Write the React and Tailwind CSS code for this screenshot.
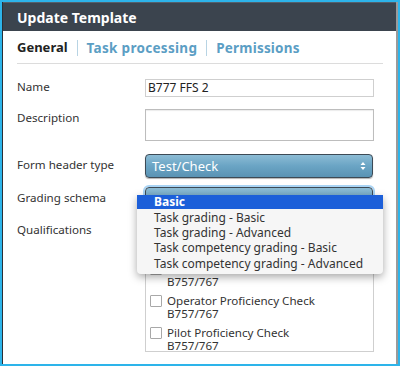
import React from "react";

const font = { fontFamily: '"Noto Sans", "DejaVu Sans", sans-serif' };

function Check({ title, sub }) {
  return (
    <div className="flex items-start gap-[5px] h-[32px]">
      <div className="mt-[1px] w-[12px] h-[12px] border border-[#a8a8a8] bg-white rounded-[1px] shrink-0" />
      <div className="text-[11.6px] leading-[13px] text-[#333]">
        <div>{title}</div>
        <div>{sub}</div>
      </div>
    </div>
  );
}

export default function App() {
  return (
    <div className="w-[400px] h-[366px] bg-[#2db4ea] p-[2px]" style={font}>
      <div className="relative w-full h-full bg-white border-l border-[#2a2f36] border-r-2 border-r-[#9a9a9a] overflow-hidden">
        <div className="h-[29px] bg-[#3b444e] border-t border-[#55606b] flex items-center pl-[14px] text-white font-bold text-[14px]">
          Update Template
        </div>
        <div className="px-[14px]">
          <div className="flex items-center h-[31px] mt-[2px] border-b border-[#dcdcdc] text-[13px] font-bold w-[366px]">
            <span className="text-[#222]">General</span>
            <span className="mx-[9px] w-px h-[16px] bg-[#b8d4e4]" />
            <span className="text-[#5b9ec4] text-[13.5px] tracking-[0.3px]">Task processing</span>
            <span className="mx-[9px] w-px h-[16px] bg-[#b8d4e4]" />
            <span className="text-[#5b9ec4] text-[13.5px] tracking-[0.2px]">Permissions</span>
          </div>

          <div className="grid grid-cols-[128px_229px] items-start text-[11.6px] leading-[14px] text-[#333] mt-[15px]">
            <div className="pt-[1px]">Name</div>
            <div className="h-[18px] border border-[#cfcfcf] flex items-center pl-[2px] text-[12px] text-[#222]">B777 FFS 2</div>

            <div className="mt-[12px] pt-[2px]">Description</div>
            <div className="mt-[12px] h-[32px] border border-[#bdbdbd] shadow-[inset_0_1px_1px_rgba(0,0,0,0.08)]" />

            <div className="mt-[13px] pt-[4px]">Form header type</div>
            <div className="mt-[13px] h-[24px] w-[228px] rounded-[4px] border border-[#3d4a55] bg-gradient-to-b from-[#8cbcd5] via-[#6aa4c4] to-[#5a93b4] flex items-center justify-between px-[6px] text-white text-[13px] shadow-[0_1px_1px_rgba(0,0,0,0.3)]">
              <span>Test/Check</span>
              <svg width="6" height="10" viewBox="0 0 6 10"><path d="M3 1 L5.5 4 H0.5 Z M3 9 L5.5 6 H0.5 Z" fill="white" /></svg>
            </div>

            <div className="mt-[9px] pt-[4px]">Grading schema</div>
            <div className="mt-[9px] h-[24px] w-[228px] rounded-[4px] border border-[#3d4a55] bg-gradient-to-b from-[#8cbcd5] to-[#5a93b4] ring-2 ring-[#a9d4f5]" />

            <div className="mt-[12px]">Qualifications</div>
            <div className="mt-[12px] h-[129px] border border-[#cfcfcf] overflow-hidden pl-[4px] pt-[6px]">
              <Check title="Instrument Proficiency Check" sub="B757/767" />
              <Check title="Line Check" sub="B757/767" />
              <Check title="Operator Proficiency Check" sub="B757/767" />
              <Check title="Pilot Proficiency Check" sub="B757/767" />
            </div>
          </div>
        </div>

        <div className="absolute left-[134px] top-[193px] w-[246px] bg-[#f6f6f6] rounded-b-[4px] shadow-[0_3px_8px_rgba(0,0,0,0.35)] text-[12px] leading-[15.2px] text-[#333] pb-[3px]">
          <div className="bg-[#1c5fd9] text-white font-bold pl-[17px] h-[14px] leading-[14px]">Basic</div>
          <div className="pl-[17px] mt-[1px]">Task grading - Basic</div>
          <div className="pl-[17px]">Task grading - Advanced</div>
          <div className="pl-[17px]">Task competency grading - Basic</div>
          <div className="pl-[17px]">Task competency grading - Advanced</div>
        </div>
      </div>
    </div>
  );
}
